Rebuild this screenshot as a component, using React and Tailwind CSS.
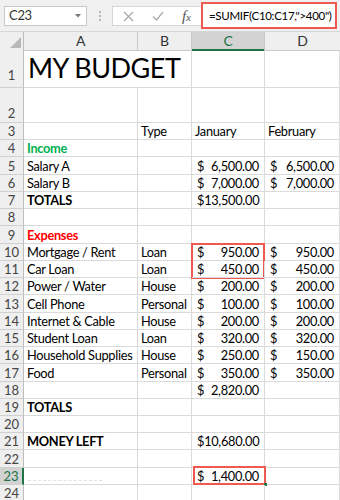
import React from "react";

const cols = "grid grid-cols-[24px_114px_54px_73px_75px]";

const rows = [
  { n: 3, b: "Type", c: "January", d: "February", plainC: true },
  { n: 4, a: "Income", aClass: "font-bold text-[#00b050]" },
  { n: 5, a: "Salary A", c: "6,500.00", d: "6,500.00" },
  { n: 6, a: "Salary B", c: "7,000.00", d: "7,000.00" },
  { n: 7, a: "TOTALS", aClass: "font-bold", c: "13,500.00" },
  { n: 8 },
  { n: 9, a: "Expenses", aClass: "font-bold text-[#ff0000]" },
  { n: 10, a: "Mortgage / Rent", b: "Loan", c: "950.00", d: "950.00", boxTop: true },
  { n: 11, a: "Car Loan", b: "Loan", c: "450.00", d: "450.00" },
  { n: 12, a: "Power / Water", b: "House", c: "200.00", d: "200.00" },
  { n: 13, a: "Cell Phone", b: "Personal", c: "100.00", d: "100.00" },
  { n: 14, a: "Internet & Cable", b: "House", c: "200.00", d: "200.00" },
  { n: 15, a: "Student Loan", b: "Loan", c: "320.00", d: "320.00" },
  { n: 16, a: "Household Supplies", b: "House", c: "250.00", d: "150.00" },
  { n: 17, a: "Food", b: "Personal", c: "350.00", d: "350.00" },
  { n: 18, c: "2,820.00" },
  { n: 19, a: "TOTALS", aClass: "font-bold" },
  { n: 20 },
  { n: 21, a: "MONEY LEFT", aClass: "font-bold", c: "10,680.00" },
  { n: 22 },
  { n: 23, c: "1,400.00", selected: true },
  { n: 24 },
];

function Money({ value }) {
  if (!value) return null;
  return (
    <div className="flex justify-between w-full pl-[5px] pr-[5px]">
      <span>$</span>
      <span>{value}</span>
    </div>
  );
}

function Cell({ children, className = "" }) {
  return (
    <div
      className={
        "border-r border-b border-[#dadada] flex items-end leading-[16px] whitespace-nowrap " +
        className
      }
    >
      {children}
    </div>
  );
}

function RowHead({ n, selected, className = "" }) {
  return (
    <div
      className={
        "flex items-end justify-center leading-[16px] text-[13px] tracking-normal border-b border-[#d0d0d0] " +
        (selected
          ? "bg-[#d2d2d2] text-[#217346] border-r-2 border-r-[#217346] "
          : "bg-[#efefef] text-[#444] border-r border-r-[#bdbdbd] ") +
        className
      }
    >
      {n}
    </div>
  );
}

function Toolbar() {
  return (
    <div className="h-[32px] bg-[#f0f0f0] flex items-start pt-[2px] border-b border-[#d6d6d6]">
      <div className="ml-[4px] mt-[4px] w-[83px] h-[20px] bg-white border border-[#c8c8c8] flex items-center justify-between pl-[4px] pr-[5px] text-[13px] text-[#333]">
        <span>C23</span>
        <svg width="6" height="4" viewBox="0 0 6 4">
          <path d="M0 0h6L3 3.5z" fill="#777" />
        </svg>
      </div>
      <div className="w-[25px] mt-[9px] flex flex-col items-center gap-[2px]">
        <span className="w-[2px] h-[2px] bg-[#b5b5b5]" />
        <span className="w-[2px] h-[2px] bg-[#b5b5b5]" />
        <span className="w-[2px] h-[2px] bg-[#b5b5b5]" />
      </div>
      <div className="mt-[4px] w-[89px] h-[20px] bg-white border border-[#d6d6d6] border-r-0 flex items-center pl-[10px] gap-[18px]">
        <svg width="11" height="11" viewBox="0 0 11 11">
          <path d="M1 1l9 9M10 1l-9 9" stroke="#a8a8a8" strokeWidth="1.2" fill="none" />
        </svg>
        <svg width="12" height="10" viewBox="0 0 12 10">
          <path d="M1 5.5l3.5 3.5L11 1" stroke="#a8a8a8" strokeWidth="1.2" fill="none" />
        </svg>
        <span className="font-['Liberation_Serif',serif] italic text-[15px] text-[#555] leading-none">
          f<span className="text-[11px]">x</span>
        </span>
      </div>
      <div className="w-[136px] h-[27px] border-2 border-[#ee5a4f] bg-white flex items-center pl-[6px] text-[11.5px] tracking-[-0.3px] text-black whitespace-nowrap overflow-hidden">
        =SUMIF(C10:C17,"&gt;400")
      </div>
    </div>
  );
}

function ColumnHeads() {
  return (
    <div className={cols + " h-[18px] text-[14px] leading-[17px]"}>
      <div className="bg-[#efefef] border-r border-b border-[#bdbdbd] flex items-end justify-end p-[2px]">
        <svg width="11" height="11" viewBox="0 0 11 11">
          <path d="M11 0v11H0z" fill="#b8b8b8" />
        </svg>
      </div>
      <div className="bg-[#efefef] border-r border-b border-[#c8c8c8] text-center text-[#333]">A</div>
      <div className="bg-[#efefef] border-r border-b border-[#c8c8c8] text-center text-[#333]">B</div>
      <div className="bg-[#d3d3d3] border-r border-[#c8c8c8] border-b-2 border-b-[#217346] text-center text-[#217346]">C</div>
      <div className="bg-[#efefef] border-b border-[#c8c8c8] text-center text-[#333]">D</div>
    </div>
  );
}

export default function App() {
  return (
    <div className="w-[340px] h-[500px] overflow-hidden bg-white font-['Lato',sans-serif] text-[12.8px] tracking-[-0.3px] text-black">
      <Toolbar />
      <ColumnHeads />

      <div className={cols + " h-[38px]"}>
        <RowHead n={1} className="pb-[4px]" />
        <div className="col-span-2 border-r border-b border-[#dadada] flex items-end pl-[4px] pb-[1px] text-[27px] tracking-[-0.5px] leading-[36px] whitespace-nowrap">
          MY BUDGET
        </div>
        <Cell />
        <Cell />
      </div>
      <div className={cols + " h-[35px]"}>
        <RowHead n={2} className="pb-[1px]" />
        <Cell />
        <Cell />
        <Cell />
        <Cell />
      </div>

      {rows.map((r) => (
        <div key={r.n} className={cols + " h-[17.24px]"}>
          <RowHead n={r.n} selected={r.selected} />
          <Cell className={"pl-[3px] relative " + (r.aClass || "")}>
            {r.a}
            {r.selected && (
              <div className="absolute left-[4px] right-[35px] bottom-[3px] border-b border-dashed border-[#e2e2e2]" />
            )}
          </Cell>
          <Cell className="pl-[3px]">{r.b}</Cell>
          <Cell className="relative">
            {r.plainC ? <span className="pl-[3px]">{r.c}</span> : <Money value={r.c} />}
            {r.boxTop && (
              <div className="absolute left-[-1px] right-[-1px] top-[-1px] h-[36px] border-2 border-[#ee5a4f] pointer-events-none" />
            )}
            {r.selected && (
              <>
                <div className="absolute left-[1px] right-[-2px] top-[-2px] bottom-[-1px] border-2 border-[#ee5a4f] pointer-events-none" />
                <div className="absolute right-[-3px] bottom-[-2px] w-[3px] h-[3px] bg-[#217346]" />
              </>
            )}
          </Cell>
          <Cell>
            {r.plainC ? <span className="pl-[3px]">{r.d}</span> : <Money value={r.d} />}
          </Cell>
        </div>
      ))}
    </div>
  );
}
